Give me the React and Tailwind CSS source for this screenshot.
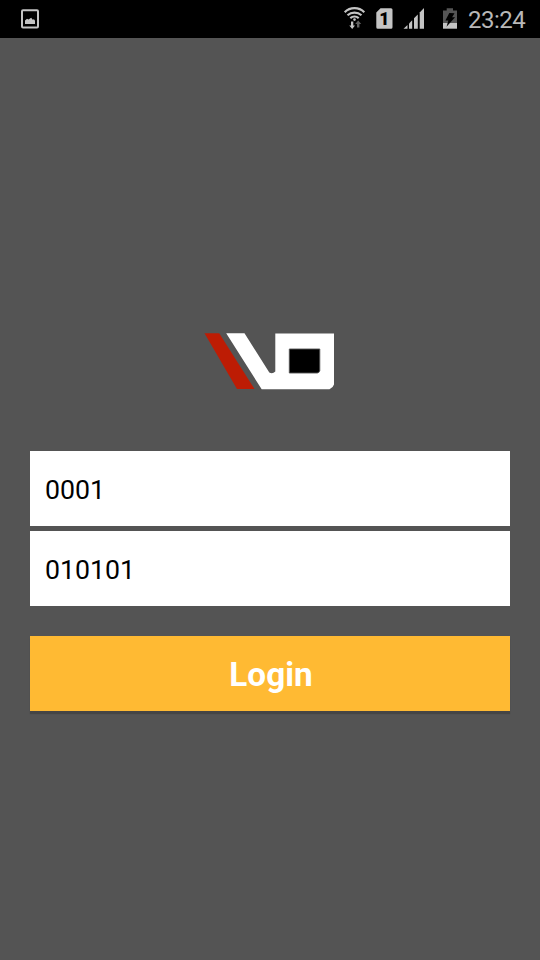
import React, { useState } from "react";

const StatusBar = () => {
  return (
    <div className="h-[38px] w-full bg-black flex justify-between shrink-0">
      <svg width="60" height="38" viewBox="0 0 60 38">
        <rect x="22" y="10.2" width="16" height="17.4" rx="1" fill="none" stroke="#c4c4c4" strokeWidth="2" />
        <path d="M25 24v-3.500l2-1.700 1.500 .7 2.700-1.700 1.500 2 1.300-.5 1 1.500V24z" fill="#c4c4c4" />
      </svg>
      <div className="flex">
        <svg width="128" height="38" viewBox="336 0 128 38">
          {/* wifi */}
          <g fill="none" stroke="#c4c4c4" strokeWidth="2.200">
            <path d="M344.700 12.200a14 14 0 0 1 19.600 0" />
            <path d="M347.500 15.200a10.500 10.500 0 0 1 14 0" />
            <path d="M350.300 18.200a6.500 6.500 0 0 1 8.400 0" />
          </g>
          <circle cx="354.500" cy="19.600" r="1.300" fill="#c4c4c4" />
          <path d="M351 21.500h2.300v4h1.700L352.200 29l-2.900-3.500h1.700z" fill="#c4c4c4" />
          <path d="M357 27.600v-3.600h-1.800L358.200 20.500l3 3.500h-1.800v3.600z" fill="#606060" />
          {/* sim card */}
          <path d="M380.500 8.300H391a1.500 1.500 0 0 1 1.500 1.500v17.400a1.500 1.500 0 0 1-1.500 1.500h-13.200a1.500 1.500 0 0 1-1.500-1.500V12.500z" fill="#c4c4c4" />
          <text x="384.300" y="25" textAnchor="middle" fontSize="17.500" fontWeight="900" fill="#000">
            1
          </text>
          {/* signal */}
          <g fill="#c4c4c4">
            <path d="M403.500 28.700l4-3.700v3.700z" />
            <path d="M409 28.700v-5.300l3.200-3.100v8.400z" />
            <path d="M414 28.700V18.300l3.800-3.900v14.300z" />
            <path d="M419.700 28.700V12.600l4.300-4.500v20.600z" />
          </g>
          {/* battery */}
          <path d="M443 10.500h3.700V8.300h6.300v2.200h4V23h-14z" fill="#555" />
          <path d="M443 23h14v5.700h-14z" fill="#c4c4c4" />
          <path d="M449.300 13l5.200 .2-2.400 4h3L446.500 26.800l1.900-6.300h-3z" fill="#000" />
        </svg>
        <span className="w-[76px] pl-1 text-[24px] leading-[40px] tracking-[-0.5px] text-[#b8b8b8]">
          23:24
        </span>
      </div>
    </div>
  );
};

const Logo = () => {
  return (
    <svg width="130" height="57" viewBox="204 333 130 57">
      <path d="M204.500 333.300h14.700L254.500 389h-17.500z" fill="#bd1c04" />
      <path
        d="M226.200 333.300h18.300L269.300 372.500Q272.500 374.500 275.300 371.500V333.600H334V384.500q-1 3.300-4.500 4.800h-67.800z"
        fill="#fff"
      />
      <path d="M289.300 349h30.500v21.500q-.3 2.200-2.500 2.500h-28z" fill="#000" stroke="#555" strokeWidth="0.900" />
    </svg>
  );
};

const App = () => {
  const [user, setUser] = useState("0001");
  const [password, setPassword] = useState("010101");

  return (
    <div className="w-[540px] h-[960px] bg-[#545454] flex flex-col overflow-hidden font-[Roboto,sans-serif]">
      <StatusBar />
      <div className="flex flex-col px-[30px] pt-[295px]">
        <div className="flex pl-[174px] mb-[61px]">
          <Logo />
        </div>
        <input
          type="text"
          className="block w-full h-[75px] mb-[5px] px-[15px] pt-[3px] bg-white text-black text-[26.7px] outline-none"
          value={user}
          onChange={(e) => setUser(e.target.value)}
        />
        <input
          type="text"
          className="block w-full h-[75px] mb-[30px] px-[15px] pt-[3px] bg-white text-black text-[26.7px] outline-none"
          value={password}
          onChange={(e) => setPassword(e.target.value)}
        />
        <button className="w-full h-[75px] pt-[2px] pl-[2px] bg-[#ffba33] text-white text-[33.3px] font-bold shadow-[0_3px_1px_rgba(0,0,0,0.17)]">
          Login
        </button>
      </div>
    </div>
  );
};

export default App;
